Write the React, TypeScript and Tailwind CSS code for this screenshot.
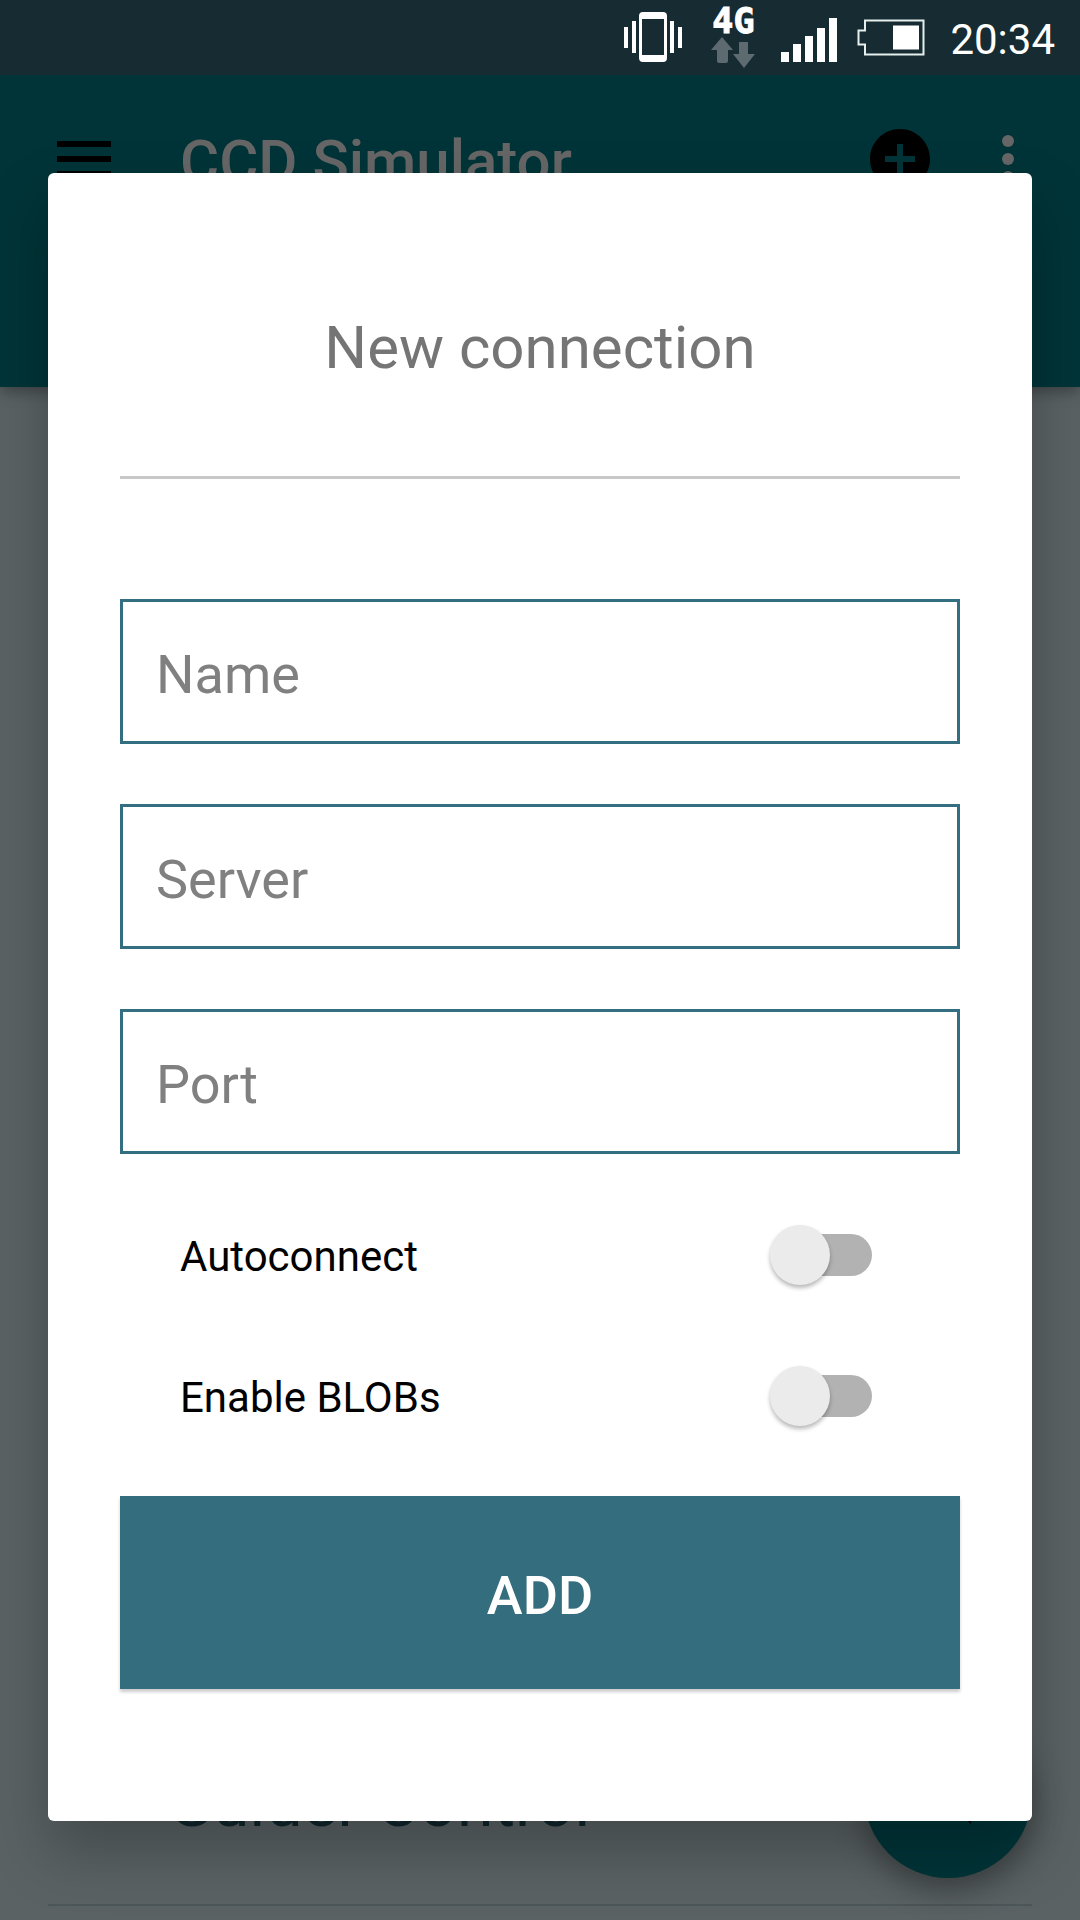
import { useState } from "react";

function StatusBar() {
  return (
    <header className="relative z-20 flex h-[75px] shrink-0 items-center justify-end bg-[#172b32] pr-[25px] text-white">
      <svg className="mr-[27px] h-[75px] w-[60px]" viewBox="0 0 60 75" fill="currentColor" aria-label="Vibrate">
        <rect x="0" y="27" width="4" height="21" />
        <rect x="8" y="21" width="4" height="32" />
        <path
          fillRule="evenodd"
          d="M19 12h20a4 4 0 0 1 4 4v42a4 4 0 0 1-4 4H19a4 4 0 0 1-4-4V16a4 4 0 0 1 4-4zM18 19v36h22V19z"
        />
        <rect x="46" y="21" width="4" height="32" />
        <rect x="54" y="27" width="4" height="21" />
      </svg>
      <div className="mr-[26px] flex w-[44px] flex-col items-center">
        <span className="h-[30px] font-['DejaVu_Sans_Mono',monospace] text-[35px] leading-[30px] font-bold [-webkit-text-stroke:1px_white]">
          4G
        </span>
        <svg className="h-[34px] w-[44px]" viewBox="0 0 44 34" fill="#5d6b70">
          <path d="M11 1 22 14h-5v11a2 2 0 0 1-2 2H8a2 2 0 0 1-2-2V14H0z" />
          <path d="M28 6h9v12h7L33 32 22 18h6z" />
        </svg>
      </div>
      <svg className="mr-[20px] h-[75px] w-[56px]" viewBox="0 0 56 75" fill="currentColor" aria-label="Signal">
        <rect x="0" y="52" width="8" height="10" />
        <rect x="12" y="44" width="8" height="18" />
        <rect x="24" y="36" width="8" height="26" />
        <rect x="36" y="28" width="8" height="34" />
        <rect x="48" y="18" width="8" height="44" />
      </svg>
      <svg className="mr-[25px] h-[75px] w-[68px]" viewBox="0 0 68 75" aria-label="Battery">
        <path d="M8 20.500H66.500V54.500H8V44.500H1.500V30.500H8z" fill="none" stroke="#e6efec" strokeWidth="2" />
        <rect x="36" y="25.500" width="26" height="24" fill="#fff" />
      </svg>
      <time className="pt-1 text-[42px] leading-[71px]">20:34</time>
    </header>
  );
}

function AppBar() {
  return (
    <div className="relative flex h-[312px] shrink-0 items-start bg-[#003438] pt-12 shadow-[0_4px_14px_rgba(0,0,0,0.35)]">
      <button type="button" aria-label="Menu" className="ml-12 flex h-[72px] w-[72px] items-center justify-center">
        <svg className="h-[36px] w-[54px]" viewBox="0 0 54 36">
          <path d="M0 0h54v6H0zM0 15h54v6H0zM0 30h54v6H0z" />
        </svg>
      </button>
      <h1 className="ml-[60px] flex-1 pt-[3px] text-[60px] leading-[72px] font-medium text-[#666]">CCD Simulator</h1>
      <button type="button" aria-label="Add connection" className="mr-9 h-[72px] w-[72px]">
        <svg viewBox="0 0 24 24">
          <path d="M12 2C6.480 2 2 6.480 2 12s4.480 10 10 10 10-4.480 10-10S17.520 2 12 2zm5 11h-4v4h-2v-4H7v-2h4V7h2v4h4v2z" />
        </svg>
      </button>
      <button type="button" aria-label="More options" className="mr-9 h-[72px] w-[72px]">
        <svg viewBox="0 0 24 24" fill="#666">
          <circle cx="12" cy="6" r="2" />
          <circle cx="12" cy="12" r="2" />
          <circle cx="12" cy="18" r="2" />
        </svg>
      </button>
    </div>
  );
}

function Field({ label }: { label: string }) {
  return (
    <input
      type="text"
      aria-label={label}
      placeholder={label}
      className="h-[145px] w-full rounded-none border-3 border-[#336f80] bg-white px-[33px] pt-[6px] text-[54px] text-black outline-none placeholder:text-[#808080]"
    />
  );
}

function SwitchRow({ id, label }: { id: string; label: string }) {
  const [on, setOn] = useState(false);
  return (
    <div className="flex h-[141px] items-center justify-between pr-[88px] pl-[60px]">
      <label htmlFor={id} className="pt-1 text-[42px] leading-[50px] text-black">
        {label}
      </label>
      <input
        id={id}
        type="checkbox"
        role="switch"
        checked={on}
        onChange={(e) => setOn(e.target.checked)}
        className="relative h-[60px] w-[102px] appearance-none before:absolute before:top-[9px] before:right-0 before:h-[42px] before:w-[84px] before:rounded-full before:bg-[#b2b2b2] after:absolute after:top-0 after:left-0 after:size-[60px] after:rounded-full after:bg-[#ebebeb] after:shadow-[0_3px_4px_rgba(0,0,0,0.28)] checked:before:bg-[#99b6be] checked:after:right-0 checked:after:left-auto checked:after:bg-[#336c7d]"
      />
    </div>
  );
}

function ConnectionDialog() {
  return (
    <div className="absolute inset-x-0 top-[75px] bottom-0 z-10 flex items-center justify-center px-12 pb-px">
      <form
        role="dialog"
        aria-labelledby="dialog-title"
        onSubmit={(e) => e.preventDefault()}
        className="flex w-full flex-col rounded-[6px] bg-white px-[72px] pb-[132px] shadow-[0_30px_60px_rgba(0,0,0,0.25)]"
      >
        <h2
          id="dialog-title"
          className="border-b-3 border-[#c8c8c8] pt-[139px] pb-[92px] text-center text-[60px] leading-[72px] text-[#757575]"
        >
          New connection
        </h2>
        <div className="mt-[120px] flex flex-col gap-[60px]">
          <Field label="Name" />
          <Field label="Server" />
          <Field label="Port" />
        </div>
        <div className="my-[30px]">
          <SwitchRow id="autoconnect" label="Autoconnect" />
          <SwitchRow id="blobs" label="Enable BLOBs" />
        </div>
        <button
          type="submit"
          className="h-[193px] bg-[#346d7e] pt-[6px] text-[54px] font-medium text-white shadow-[0_3px_3px_rgba(0,0,0,0.2)]"
        >
          ADD
        </button>
      </form>
    </div>
  );
}

export default function App() {
  return (
    <div className="relative flex min-h-screen flex-col overflow-hidden bg-[#5a6264] font-[Roboto,sans-serif]">
      <StatusBar />
      <AppBar />
      <main className="flex flex-1 flex-col justify-end px-12 pb-[14px]">
        <h3 className="border-b-2 border-[#4d5658] pb-[61px] pl-[120px] text-[66px] leading-[78px] text-[#10262b]">
          Guider Control
        </h3>
      </main>
      <button
        type="button"
        aria-label="Edit"
        className="absolute right-12 bottom-[42px] flex size-[168px] items-center justify-center rounded-full bg-[#003438] shadow-[0_12px_30px_rgba(0,0,0,0.35)]"
      >
        <svg className="size-[72px]" viewBox="0 0 72 72">
          <path d="M59 66 48 55V42H36v-8h12V20l11-11z" />
        </svg>
      </button>
      <ConnectionDialog />
    </div>
  );
}
